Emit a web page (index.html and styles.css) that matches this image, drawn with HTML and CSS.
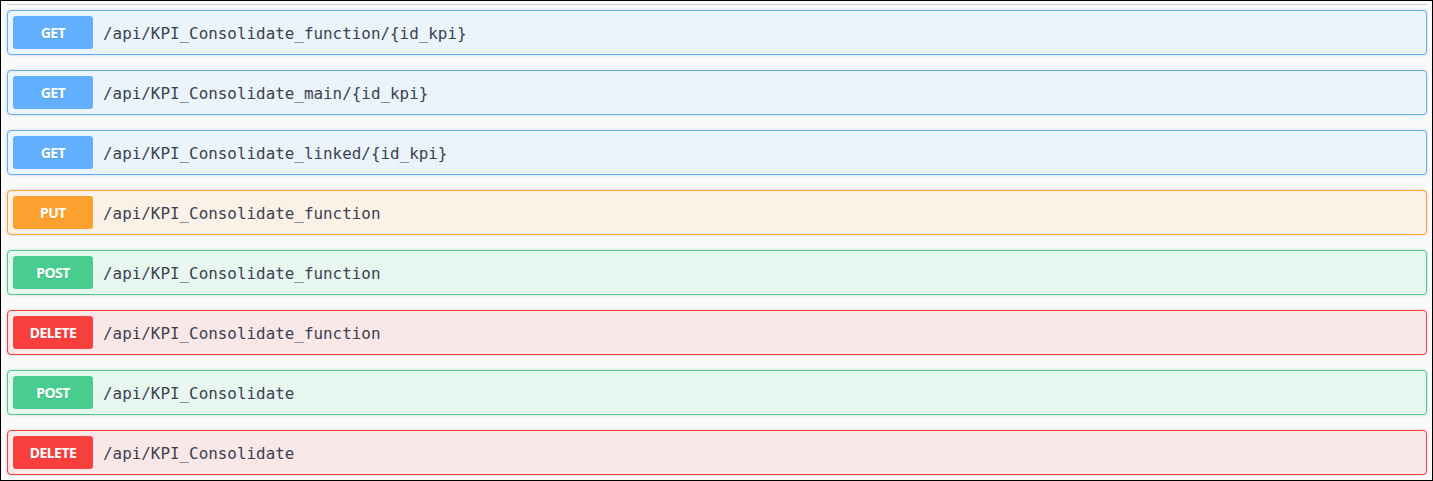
FILE: index.html
```html
<!DOCTYPE html>
<html lang="en">
<head>
    <meta charset="UTF-8">
    <title>KPI_Consolidate</title>
    <link rel="stylesheet" href="styles.css">
</head>
<body>
    <div class="frame">
        <div class="operations">
            <div class="opblock opblock-get">
                <span class="method">GET</span>
                <span class="path">/api/KPI_Consolidate_function/{id_kpi}</span>
            </div>
            <div class="opblock opblock-get">
                <span class="method">GET</span>
                <span class="path">/api/KPI_Consolidate_main/{id_kpi}</span>
            </div>
            <div class="opblock opblock-get">
                <span class="method">GET</span>
                <span class="path">/api/KPI_Consolidate_linked/{id_kpi}</span>
            </div>
            <div class="opblock opblock-put">
                <span class="method">PUT</span>
                <span class="path">/api/KPI_Consolidate_function</span>
            </div>
            <div class="opblock opblock-post">
                <span class="method">POST</span>
                <span class="path">/api/KPI_Consolidate_function</span>
            </div>
            <div class="opblock opblock-delete">
                <span class="method">DELETE</span>
                <span class="path">/api/KPI_Consolidate_function</span>
            </div>
            <div class="opblock opblock-post">
                <span class="method">POST</span>
                <span class="path">/api/KPI_Consolidate</span>
            </div>
            <div class="opblock opblock-delete">
                <span class="method">DELETE</span>
                <span class="path">/api/KPI_Consolidate</span>
            </div>
        </div>
    </div>
</body>
</html>
```

FILE: styles.css
```css
html, body { margin: 0; padding: 0; background: #fff; }
.frame { box-sizing: border-box; width: 1433px; height: 481px; border: 1px solid #000; padding: 3px 5px 0 6px; background: #fafafa; overflow: hidden; }
.operations { border-top: 1px solid #d0d0d4; padding-top: 5px; }

.opblock { display: flex; align-items: center; height: 43px; padding: 0 5px; margin: 0 0 15px 0; border: 1px solid; border-radius: 4px; box-shadow: 0 0 3px rgba(0,0,0,.19); }
.method { width: 80px; padding: 6px 0; line-height: 21px; border-radius: 3px; text-align: center; color: #fff; font-family: "Noto Sans", sans-serif; font-size: 14px; font-weight: 700; letter-spacing: -0.5px; text-shadow: 0 1px 0 rgba(0,0,0,.1); }
.path { padding: 1px 10px 0; color: #3b4151; font-family: "DejaVu Sans Mono", monospace; font-size: 15.9px; }

.opblock-get { background: #ebf3fb; border-color: #61affe; }
.opblock-get .method { background: #61affe; }
.opblock-put { background: #fbf1e6; border-color: #fca130; }
.opblock-put .method { background: #fca130; }
.opblock-post { background: #e8f6f0; border-color: #49cc90; }
.opblock-post .method { background: #49cc90; }
.opblock-delete { background: #fae7e7; border-color: #f93e3e; }
.opblock-delete .method { background: #f93e3e; }
```
